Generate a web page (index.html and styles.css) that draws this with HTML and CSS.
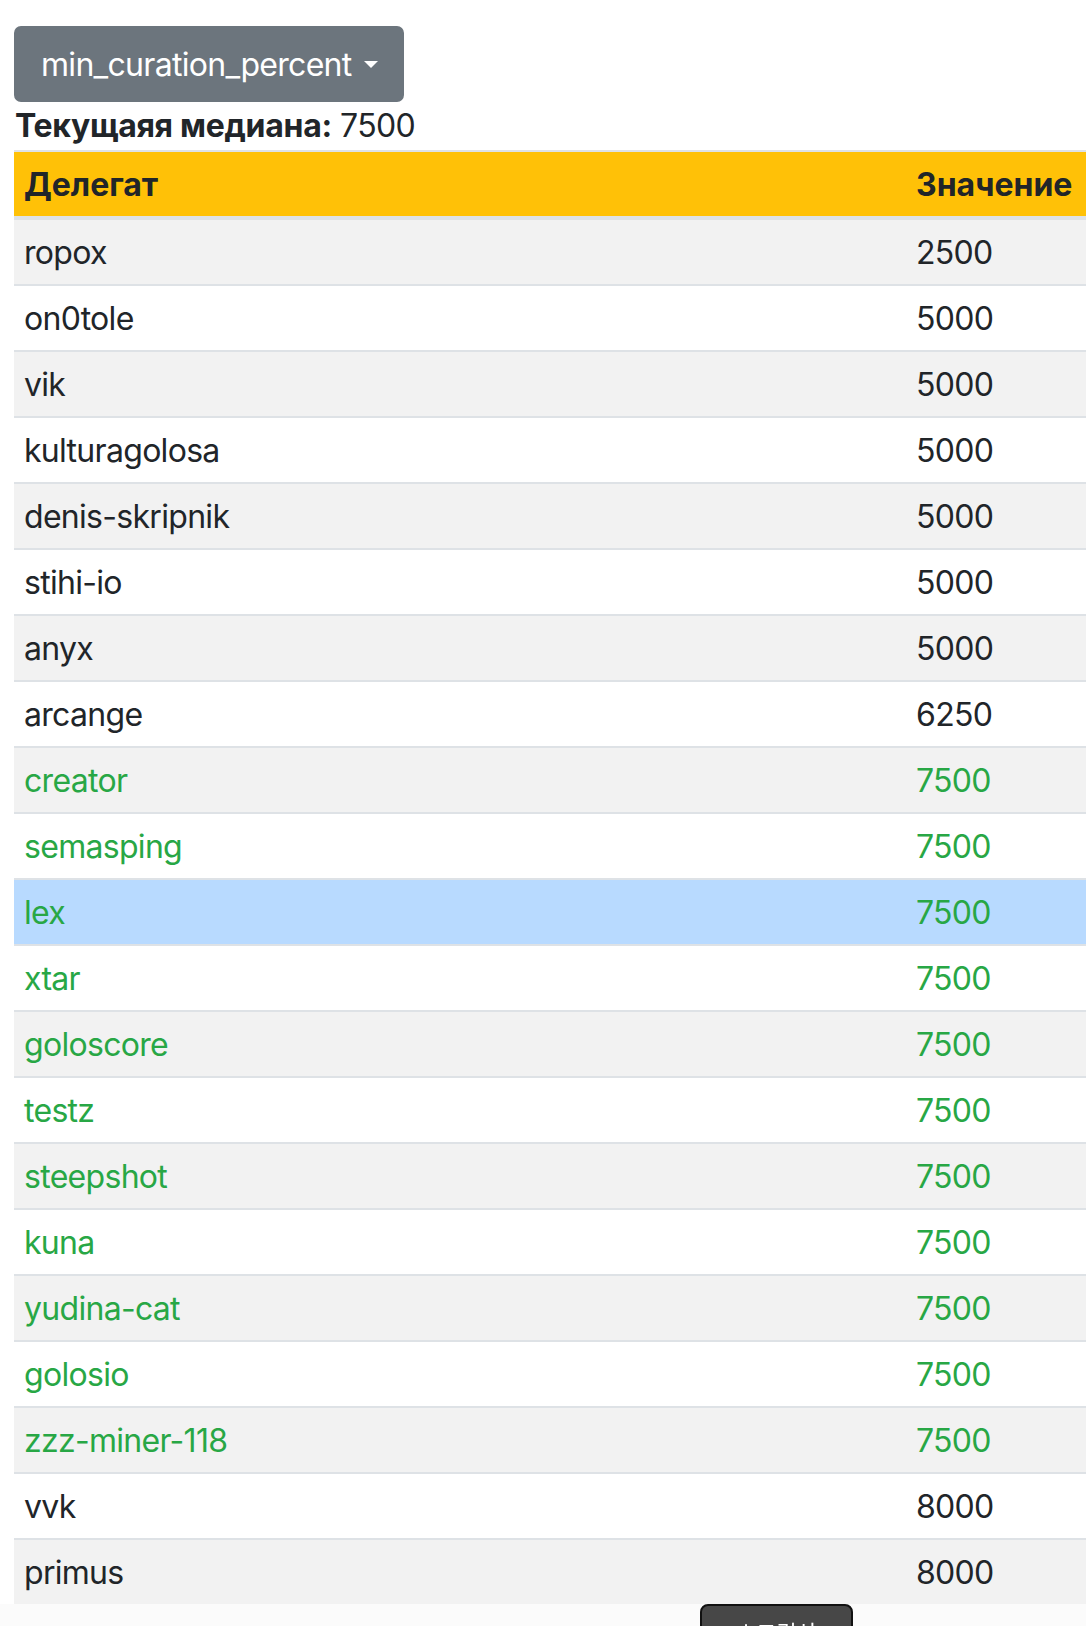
FILE: index.html
```html
<!DOCTYPE html>
<html lang="ru">
  <head>
    <meta charset="UTF-8" />
    <meta name="viewport" content="width=device-width, initial-scale=1.0" />
    <title>min_curation_percent</title>
    <link rel="stylesheet" href="styles.css">
  </head>
  <body>
    <div class="page">
      <button class="btn-param" type="button">min_curation_percent<span class="caret"></span></button>
      <div class="median"><strong>Текущаяя медиана:</strong> 7500</div>
      <table class="votes">
        <thead>
          <tr>
            <th class="col-name">Делегат</th>
            <th class="col-value">Значение</th>
          </tr>
        </thead>
        <tbody>
          <tr><td>ropox</td><td>2500</td></tr>
          <tr><td>on0tole</td><td>5000</td></tr>
          <tr><td>vik</td><td>5000</td></tr>
          <tr><td>kulturagolosa</td><td>5000</td></tr>
          <tr><td>denis-skripnik</td><td>5000</td></tr>
          <tr><td>stihi-io</td><td>5000</td></tr>
          <tr><td>anyx</td><td>5000</td></tr>
          <tr><td>arcange</td><td>6250</td></tr>
          <tr class="match"><td>creator</td><td>7500</td></tr>
          <tr class="match"><td>semasping</td><td>7500</td></tr>
          <tr class="match current"><td>lex</td><td>7500</td></tr>
          <tr class="match"><td>xtar</td><td>7500</td></tr>
          <tr class="match"><td>goloscore</td><td>7500</td></tr>
          <tr class="match"><td>testz</td><td>7500</td></tr>
          <tr class="match"><td>steepshot</td><td>7500</td></tr>
          <tr class="match"><td>kuna</td><td>7500</td></tr>
          <tr class="match"><td>yudina-cat</td><td>7500</td></tr>
          <tr class="match"><td>golosio</td><td>7500</td></tr>
          <tr class="match"><td>zzz-miner-118</td><td>7500</td></tr>
          <tr><td>vvk</td><td>8000</td></tr>
          <tr><td>primus</td><td>8000</td></tr>
        </tbody>
      </table>
    </div>

    <div class="scrap-bar">
      <button class="scrap-btn" type="button">스크린샷</button>
    </div>
  </body>
</html>
```

FILE: styles.css
```css
body {
  margin: 0;
  font-family: Inter, "Noto Sans", sans-serif;
  font-size: 32px;
  line-height: 48px;
  letter-spacing: -0.7px;
  color: #212529;
  background: #fff;
}
strong,
th {
  letter-spacing: 0;
}
.page {
  padding: 26px 0 0 14px;
}
.btn-param {
  display: block;
  height: 76px;
  padding: 0 24px 0 25px;
  background-color: #6c757d;
  color: #fff;
  border: 2px solid #6c757d;
  border-radius: 7px;
  font-family: inherit;
  font-size: 32px;
  letter-spacing: -0.7px;
}
.caret {
  display: inline-block;
  margin-left: 12px;
  vertical-align: 8px;
  border-top: 7px solid #fff;
  border-left: 7px solid transparent;
  border-right: 7px solid transparent;
}
.median {
  height: 48px;
  padding-left: 1px;
}
.median strong {
  letter-spacing: -0.3px;
}
.votes {
  width: 1072px;
  border-collapse: collapse;
}
.votes th,
.votes td {
  padding: 9px 8px 7px 10px;
  text-align: left;
  border-top: 2px solid #dee2e6;
}
.votes thead th {
  background-color: #ffc107;
  font-weight: bold;
  border-bottom: 4px solid #dee2e6;
}
.votes .col-value {
  width: 162px;
}
.votes tbody tr:nth-child(odd) {
  background-color: #f2f2f2;
}
.votes tbody tr.match {
  color: #28a745;
}
.votes tbody tr.current {
  background-color: #b8daff;
}
.scrap-bar {
  position: fixed;
  left: 0;
  right: 0;
  bottom: 0;
  height: 22px;
  background: #fbfbfb;
}
.scrap-btn {
  position: absolute;
  left: 700px;
  top: 0;
  width: 153px;
  height: 44px;
  padding: 10px 0 0;
  background: #474747;
  color: #fff;
  border: 2px solid #111;
  border-radius: 8px;
  font-family: "Noto Sans CJK KR", sans-serif;
  font-size: 22px;
  line-height: 30px;
  letter-spacing: 0;
  text-align: center;
  vertical-align: top;
}
```
